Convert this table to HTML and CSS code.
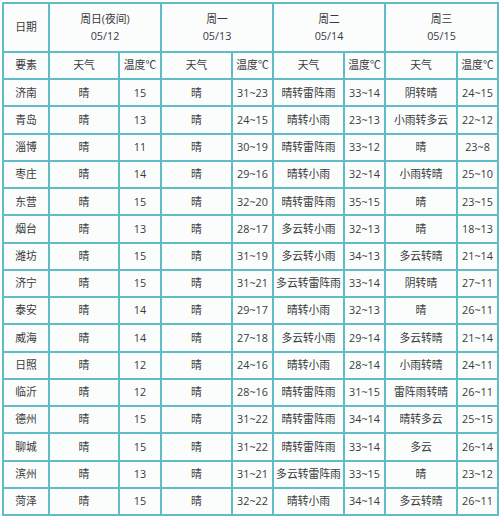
FILE: index.html
```html
<!DOCTYPE html>
<html lang="zh">
<head>
<meta charset="utf-8">
<title>山东天气预报</title>
<link rel="stylesheet" href="styles.css">
</head>
<body>
<div class="grid">
  <div class="c date">日期</div>
  <div class="c day span2">周日(夜间)<br>05/12</div>
  <div class="c day span2">周一<br>05/13</div>
  <div class="c day span2">周二<br>05/14</div>
  <div class="c day span2">周三<br>05/15</div>

  <div class="c">要素</div>
  <div class="c">天气</div><div class="c">温度℃</div>
  <div class="c">天气</div><div class="c">温度℃</div>
  <div class="c">天气</div><div class="c">温度℃</div>
  <div class="c">天气</div><div class="c">温度℃</div>

  <div class="c">济南</div><div class="c">晴</div><div class="c">15</div><div class="c">晴</div><div class="c">31~23</div><div class="c">晴转雷阵雨</div><div class="c">33~14</div><div class="c">阴转晴</div><div class="c">24~15</div>
  <div class="c">青岛</div><div class="c">晴</div><div class="c">13</div><div class="c">晴</div><div class="c">24~15</div><div class="c">晴转小雨</div><div class="c">23~13</div><div class="c">小雨转多云</div><div class="c">22~12</div>
  <div class="c">淄博</div><div class="c">晴</div><div class="c">11</div><div class="c">晴</div><div class="c">30~19</div><div class="c">晴转雷阵雨</div><div class="c">33~12</div><div class="c">晴</div><div class="c">23~8</div>
  <div class="c">枣庄</div><div class="c">晴</div><div class="c">14</div><div class="c">晴</div><div class="c">29~16</div><div class="c">晴转小雨</div><div class="c">32~14</div><div class="c">小雨转晴</div><div class="c">25~10</div>
  <div class="c">东营</div><div class="c">晴</div><div class="c">15</div><div class="c">晴</div><div class="c">32~20</div><div class="c">晴转雷阵雨</div><div class="c">35~15</div><div class="c">晴</div><div class="c">23~15</div>
  <div class="c">烟台</div><div class="c">晴</div><div class="c">13</div><div class="c">晴</div><div class="c">28~17</div><div class="c">多云转小雨</div><div class="c">32~13</div><div class="c">晴</div><div class="c">18~13</div>
  <div class="c">潍坊</div><div class="c">晴</div><div class="c">15</div><div class="c">晴</div><div class="c">31~19</div><div class="c">多云转小雨</div><div class="c">34~13</div><div class="c">多云转晴</div><div class="c">21~14</div>
  <div class="c">济宁</div><div class="c">晴</div><div class="c">15</div><div class="c">晴</div><div class="c">31~21</div><div class="c">多云转雷阵雨</div><div class="c">33~14</div><div class="c">阴转晴</div><div class="c">27~11</div>
  <div class="c">泰安</div><div class="c">晴</div><div class="c">14</div><div class="c">晴</div><div class="c">29~17</div><div class="c">晴转小雨</div><div class="c">32~13</div><div class="c">晴</div><div class="c">26~11</div>
  <div class="c">威海</div><div class="c">晴</div><div class="c">14</div><div class="c">晴</div><div class="c">27~18</div><div class="c">多云转小雨</div><div class="c">29~14</div><div class="c">多云转晴</div><div class="c">21~14</div>
  <div class="c">日照</div><div class="c">晴</div><div class="c">12</div><div class="c">晴</div><div class="c">24~16</div><div class="c">晴转小雨</div><div class="c">28~14</div><div class="c">小雨转晴</div><div class="c">24~11</div>
  <div class="c">临沂</div><div class="c">晴</div><div class="c">12</div><div class="c">晴</div><div class="c">28~16</div><div class="c">晴转雷阵雨</div><div class="c">31~15</div><div class="c">雷阵雨转晴</div><div class="c">26~11</div>
  <div class="c">德州</div><div class="c">晴</div><div class="c">15</div><div class="c">晴</div><div class="c">31~22</div><div class="c">晴转雷阵雨</div><div class="c">34~14</div><div class="c">晴转多云</div><div class="c">25~15</div>
  <div class="c">聊城</div><div class="c">晴</div><div class="c">15</div><div class="c">晴</div><div class="c">31~22</div><div class="c">晴转雷阵雨</div><div class="c">33~14</div><div class="c">多云</div><div class="c">26~14</div>
  <div class="c">滨州</div><div class="c">晴</div><div class="c">13</div><div class="c">晴</div><div class="c">31~21</div><div class="c">多云转雷阵雨</div><div class="c">33~15</div><div class="c">晴</div><div class="c">23~12</div>
  <div class="c">菏泽</div><div class="c">晴</div><div class="c">15</div><div class="c">晴</div><div class="c">32~22</div><div class="c">晴转小雨</div><div class="c">34~14</div><div class="c">多云转晴</div><div class="c">26~11</div>
</div>
</body>
</html>
```

FILE: styles.css
```css
html, body {
  margin: 0;
  padding: 0;
  background: #ffffff;
}

body {
  padding: 2px 0 0 2px;
  font-family: "Open Sans", "Noto Sans CJK SC", sans-serif;
  font-size: 10.8px;
  color: #3a3a3a;
}

.grid {
  display: grid;
  width: 497px;
  height: 514px;
  box-sizing: border-box;
  padding: 2px;
  gap: 2px;
  background: #62bcc8;
  grid-template-columns: 44px 68px 40px 69px 39px 69px 39px 70px 39px;
  grid-template-rows: 47px repeat(17, 1fr);
}

.c {
  background: #fbfdfd;
  display: flex;
  align-items: center;
  justify-content: center;
  text-align: center;
  line-height: 1.35;
  white-space: nowrap;
}

.span2 {
  grid-column: span 2;
}

.day {
  line-height: 1.5;
}
```
